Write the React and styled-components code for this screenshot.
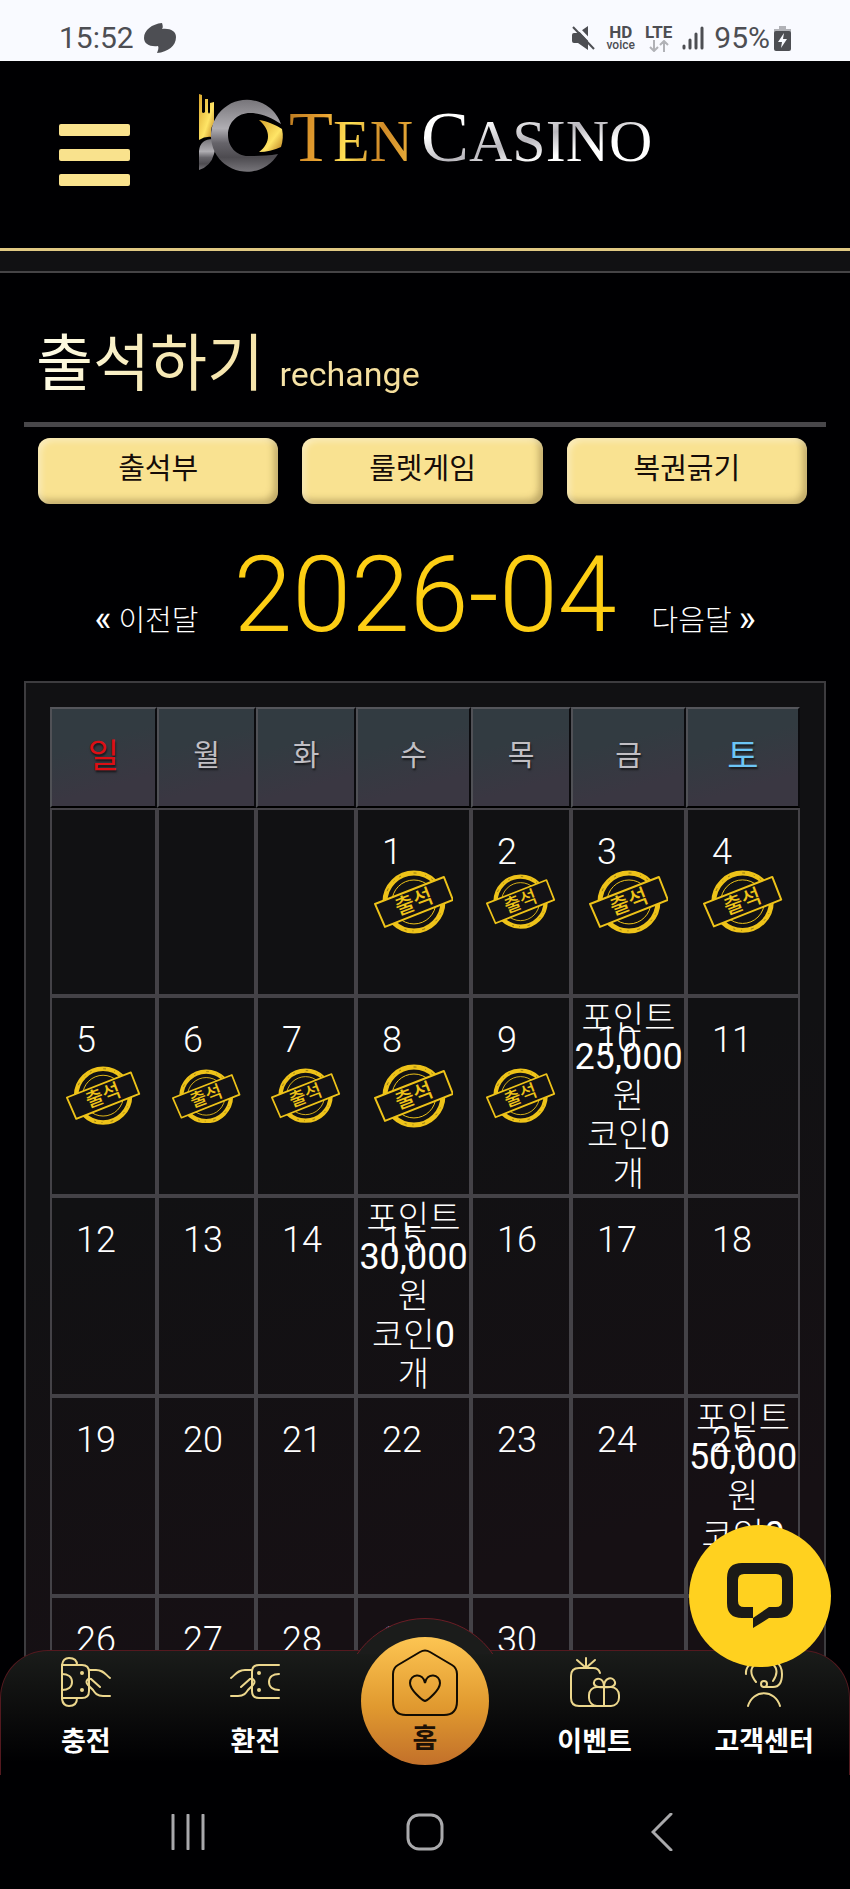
import React from "react";
import styled, { createGlobalStyle } from "styled-components";

const WEEKDAYS = [
  { label: "일", tone: "sun", width: 107 },
  { label: "월", width: 99 },
  { label: "화", width: 100 },
  { label: "수", width: 115 },
  { label: "목", width: 100 },
  { label: "금", width: 115 },
  { label: "토", tone: "sat", width: 114 },
];

const FIRST_WEEKDAY = 3;
const DAYS_IN_MONTH = 30;
const LAST_ATTENDED = 9;
const REWARDS = { 10: "25,000", 15: "30,000", 25: "50,000" };

const weeks = Array.from({ length: 5 }, (_, week) =>
  Array.from({ length: 7 }, (_, weekday) => {
    const day = week * 7 + weekday - FIRST_WEEKDAY + 1;
    return day >= 1 && day <= DAYS_IN_MONTH ? day : null;
  })
);

export default function App() {
  return (
    <Phone>
      <GlobalStyle />
      <StatusBar />
      <Viewport>
        <Page>
          <Header>
            <MenuButton type="button" aria-label="메뉴">
              <MenuBar />
              <MenuBar />
              <MenuBar />
            </MenuButton>
            <Logo href="#home">
              <LogoMark />
              <Words>
                <Wordmark $gold>
                  T<SmallCap>EN</SmallCap>
                </Wordmark>
                <Wordmark>
                  C<SmallCap>ASINO</SmallCap>
                </Wordmark>
              </Words>
            </Logo>
          </Header>
          <Strip />
          <Content>
            <TitleRow>
              <Title>
                출석하기 <SubTitle>rechange</SubTitle>
              </Title>
            </TitleRow>
            <Tabs>
              <TabButton type="button">출석부</TabButton>
              <TabButton type="button">룰렛게임</TabButton>
              <TabButton type="button">복권긁기</TabButton>
            </Tabs>
            <MonthRow>
              <MonthLink href="#prev">
                <b>«</b> 이전달
              </MonthLink>
              <Month>2026-04</Month>
              <MonthLink href="#next">
                다음달 <b>»</b>
              </MonthLink>
            </MonthRow>
            <Calendar />
          </Content>
        </Page>
        <BottomNav />
        <ChatButton type="button" aria-label="채팅">
          <svg width="66" height="66" viewBox="0 0 66 66">
            <path
              fill="#1b1a17"
              fillRule="evenodd"
              d="M15 0H51Q66 0 66 15V40Q66 55 51 55H42L26 65V55H15Q0 55 0 40V15Q0 0 15 0ZM17 11Q11 11 11 17V38Q11 44 17 44H26V55L42 44H49Q55 44 55 38V17Q55 11 49 11Z"
            />
          </svg>
        </ChatButton>
      </Viewport>
      <SystemNav />
    </Phone>
  );
}

function StatusBar() {
  return (
    <StatusWrap>
      <StatusGroup>
        <StatusText>15:52</StatusText>
        <svg width="32" height="30" viewBox="0 0 32 30">
          <path
            fill="#4d4e53"
            d="M18 0C19 3 19 5 18 6C26 5 32 8 32 14C32 23 24 29 13 30C14 27 15 25 14 23C6 24 0 21 0 15C0 7 8 1 18 0Z"
          />
        </svg>
      </StatusGroup>
      <StatusGroup>
        <svg width="24" height="24" viewBox="0 0 24 24">
          <path fill="#4d4e53" d="M0 9Q0 7 2 7H6L16 0V24L6 17H2Q0 17 0 15Z" />
          <path stroke="#f9faff" strokeWidth="3" d="M4 0L24 21" />
          <path stroke="#4d4e53" strokeWidth="2" d="M1 1L22 23" />
        </svg>
        <NetworkBadge>
          HD<small>voice</small>
        </NetworkBadge>
        <NetworkBadge>
          LTE
          <svg width="20" height="12" viewBox="0 0 20 12">
            <path
              fill="none"
              stroke="#b1b2b7"
              strokeWidth="2"
              d="M5 0V11M1 7L5 11L9 7M15 12V1M11 5L15 1L19 5"
            />
          </svg>
        </NetworkBadge>
        <svg width="22" height="24" viewBox="0 0 22 24">
          <path
            stroke="#4d4e53"
            strokeWidth="3"
            strokeLinecap="round"
            d="M2 20V22M8 14V22M14 8V22M20 2V22"
          />
        </svg>
        <BatteryGroup>
          <StatusText>95%</StatusText>
          <svg width="17" height="25" viewBox="0 0 17 25">
            <path fill="#b1b2b7" d="M5 0H12V3H17V7H0V3H5Z" />
            <rect y="5" width="17" height="20" rx="2" fill="#4d4e53" />
            <path fill="#f9faff" d="M10 7L4 16H8L7 22L13 13H9Z" />
          </svg>
        </BatteryGroup>
      </StatusGroup>
    </StatusWrap>
  );
}

function LogoMark() {
  return (
    <svg width="86" height="78" viewBox="0 0 86 78">
      <defs>
        <linearGradient id="silver" x1="0" y1="0" x2="0" y2="1">
          <stop offset="0" stopColor="#77757a" />
          <stop offset="0.4" stopColor="#b0aeb3" />
          <stop offset="0.6" stopColor="#66646a" />
          <stop offset="0.8" stopColor="#4d4b50" />
          <stop offset="1" stopColor="#77757a" />
        </linearGradient>
        <linearGradient id="gold" x1="0" y1="0" x2="1" y2="1">
          <stop offset="0" stopColor="#d9a52c" />
          <stop offset="0.6" stopColor="#ffe566" />
          <stop offset="1" stopColor="#b87a1c" />
        </linearGradient>
      </defs>
      <path
        fill="url(#gold)"
        d="M1 0L4 1V18Q5 20 7 18V5L10 5V18Q11 21 12 18V9L16 8V29Q11 36 14 43Q7 42 1 46Z"
      />
      <path fill="url(#silver)" d="M1 76V57Q2 45 15 45Q19 52 16 60Q13 72 1 76Z" />
      <path
        fill="url(#silver)"
        d="M83 30A36 36 0 1 0 80 60C70 62 60 62 50 62C38 62 30 52 30 41C30 28 40 19 52 19C63 19 73 23 83 30Z"
      />
      <path
        fill="url(#gold)"
        d="M61 26C69 27 78 31 84 35Q86 44 83 53Q72 58 61 58C73 49 73 36 61 26Z"
      />
    </svg>
  );
}

function Calendar() {
  return (
    <CalendarBox>
      <CalendarTable>
        <colgroup>
          {WEEKDAYS.map(({ label, width }) => (
            <col key={label} width={width} />
          ))}
        </colgroup>
        <thead>
          <tr>
            {WEEKDAYS.map(({ label, tone }) => (
              <WeekdayCell key={label} $tone={tone}>
                {label}
              </WeekdayCell>
            ))}
          </tr>
        </thead>
        <tbody>
          {weeks.map((days, week) => (
            <tr key={week}>
              {days.map((day, weekday) => (
                <DayCell key={weekday} $short={week === 0}>
                  {day && <DayNumber>{day}</DayNumber>}
                  {day && day <= LAST_ATTENDED && <Stamp />}
                  {REWARDS[day] && (
                    <Reward>
                      포인트
                      <br />
                      <b>{REWARDS[day]}</b>
                      <br />
                      원
                      <br />
                      코인<b>0</b>
                      <br />개
                    </Reward>
                  )}
                </DayCell>
              ))}
            </tr>
          ))}
        </tbody>
      </CalendarTable>
    </CalendarBox>
  );
}

function Stamp() {
  return (
    <StampSvg viewBox="0 0 80 64" role="img" aria-label="출석">
      <g fill="none" stroke="#eec319">
        <circle cx="40" cy="32" r="29" strokeWidth="5" />
        <circle cx="40" cy="32" r="22" strokeWidth="1" />
        <circle
          cx="40"
          cy="32"
          r="29"
          stroke="#8a7215"
          strokeWidth="1"
          strokeDasharray="3 9 1 6 2 13"
        />
        <path
          fill="#131215"
          strokeWidth="2"
          strokeLinejoin="round"
          d="M1 34L70 7L79 30L11 57Z"
        />
      </g>
      <text
        x="40"
        y="39"
        textAnchor="middle"
        fontSize="21"
        fontWeight="500"
        fill="#eec319"
        transform="rotate(-21 40 32)"
      >
        출석
      </text>
    </StampSvg>
  );
}

const chipCard = (
  <>
    <path d="M1 8H21Q28 8 28 15V34Q28 41 21 41H1M1 17C7 17 11 20 11 25S7 33 1 33" />
    <path d="M28 13H35C42 13 44 17 49 21M49 39H42C36 39 34 36 32 33L27 28C24 25 26 21 30 22L39 30" />
    <circle cx="21" cy="16" r="1" />
    <circle cx="21" cy="33" r="1" />
  </>
);

const navItems = [
  {
    label: "충전",
    icon: (
      <>
        {chipCard}
        <path d="M1 8V42M1 8Q2 1 8 1Q16 1 16 8M1 42Q2 49 8 49Q16 49 16 41" />
      </>
    ),
  },
  { label: "환전", icon: <g transform="matrix(-1 0 0 1 50 0)">{chipCard}</g> },
  { label: "홈", home: true },
  {
    label: "이벤트",
    icon: (
      <>
        <path d="M30 16C29 12 27 11 23 11H9Q1 11 1 19V41Q1 49 9 49H40M16 1V10M7 3L15 10M25 3L17 10" />
        <rect x="19" y="30" width="30" height="19" rx="8" />
        <path d="M34 49V30C28 31 23 29 24 25C25 20 34 20 34 30C34 20 43 19 45 25C46 29 41 31 34 30" />
      </>
    ),
  },
  {
    label: "고객센터",
    icon: (
      <>
        <path d="M7 17C5 0 43 -7 43 17Q43 30 34 30H25M17 25C8 14 13 5 25 5S41 14 34 24M9 49C14 32 36 32 41 49" />
        <circle cx="25" cy="27" r="3" />
      </>
    ),
  },
];

function BottomNav() {
  return (
    <NavBar>
      <HumpClip>
        <Hump />
      </HumpClip>
      {navItems.map(({ label, icon, home }) =>
        home ? (
          <HomeLink key={label} href="#home">
            <svg
              width="66"
              height="67"
              viewBox="0 0 66 67"
              fill="none"
              stroke="#120c02"
              strokeWidth="2"
            >
              <path d="M28 3Q33 0 38 3L60 16Q65 19 65 25V52Q65 66 52 66H14Q1 66 1 52V25Q1 19 6 16Z" />
              <path d="M33 52C30 51 18 41 18 34C18 25 31 23 33 34C35 23 48 25 48 34C48 41 36 51 33 52Z" />
            </svg>
            <NavLabel>{label}</NavLabel>
          </HomeLink>
        ) : (
          <NavLink key={label} href="#menu">
            <svg
              width="50"
              height="50"
              viewBox="0 0 50 50"
              fill="none"
              stroke="#ecd78d"
              strokeWidth="2"
              strokeLinecap="round"
            >
              {icon}
            </svg>
            <NavLabel>{label}</NavLabel>
          </NavLink>
        )
      )}
    </NavBar>
  );
}

function SystemNav() {
  return (
    <SystemBar>
      <SystemButton type="button" aria-label="최근 앱">
        <svg width="34" height="36" viewBox="0 0 34 36">
          <path d="M2 1V35M17 1V35M32 1V35" />
        </svg>
      </SystemButton>
      <SystemButton type="button" aria-label="홈 화면">
        <svg width="38" height="38" viewBox="0 0 38 38">
          <rect x="2" y="2" width="34" height="34" rx="11" />
        </svg>
      </SystemButton>
      <SystemButton type="button" aria-label="뒤로">
        <svg width="22" height="38" viewBox="0 0 22 38">
          <path d="M20 1L2 19L20 37" />
        </svg>
      </SystemButton>
    </SystemBar>
  );
}

const GlobalStyle = createGlobalStyle`
  *, *::before, *::after {
    box-sizing: border-box;
  }

  body {
    margin: 0;
    background: #000002;
    color: #ffffff;
    font-family: Roboto, "Noto Sans CJK KR", sans-serif;
  }

  button {
    padding: 0;
    border: 0;
    background: none;
    color: inherit;
    font: inherit;
    cursor: pointer;
  }

  a {
    color: inherit;
    text-decoration: none;
  }

  svg {
    display: block;
    flex-shrink: 0;
  }
`;

const Phone = styled.div`
  display: flex;
  flex-direction: column;
  height: 100vh;
  overflow: hidden;
`;

const StatusWrap = styled.div`
  flex-shrink: 0;
  display: flex;
  justify-content: space-between;
  height: 61px;
  padding: 15px 59px 0;
  background: #f9faff;
  color: #4d4e53;
`;

const StatusGroup = styled.div`
  display: flex;
  align-items: center;
  gap: 10px;
`;

const BatteryGroup = styled(StatusGroup)`
  gap: 4px;
`;

const StatusText = styled.span`
  font-size: 30px;
  line-height: 36px;
`;

const NetworkBadge = styled.span`
  display: flex;
  flex-direction: column;
  align-items: center;
  gap: 1px;
  font-size: 17px;
  font-weight: 700;
  line-height: 14px;

  small {
    font-size: 12px;
    font-weight: 500;
    line-height: 11px;
  }
`;

const Viewport = styled.div`
  position: relative;
  flex: 1;
  min-height: 0;
  overflow: hidden;
`;

const Page = styled.main`
  height: 100%;
  overflow: hidden;
`;

const Header = styled.header`
  display: flex;
  align-items: center;
  gap: 68px;
  height: 190px;
  padding: 0 59px;
  border-bottom: 3px solid #e0c983;
`;

const MenuButton = styled.button`
  display: flex;
  flex-direction: column;
  gap: 13px;
  width: 71px;
`;

const MenuBar = styled.span`
  height: 12px;
  border-radius: 2px;
  background: #f9e28d;
`;

const Logo = styled.a`
  display: flex;
  align-self: flex-start;
  gap: 5px;
  margin-top: 33px;
  font-family: "Liberation Serif", serif;
`;

const Words = styled.span`
  display: flex;
  gap: 8px;
`;

const Wordmark = styled.span`
  font-size: 72px;
  line-height: 86px;
  color: transparent;
  background: ${({ $gold }) =>
    $gold
      ? "linear-gradient(100deg, #b87820 0%, #e8a030 28%, #ffe255 48%, #d08a28 72%, #edb43c 100%)"
      : "linear-gradient(165deg, #ffffff 30%, #b9b7bd 50%, #ffffff 66%)"};
  -webkit-background-clip: text;
  background-clip: text;
`;

const SmallCap = styled.span`
  font-size: 60px;
  line-height: 1;
`;

const Strip = styled.div`
  height: 22px;
  border-bottom: 2px solid #454446;
  background: #111113;
`;

const Content = styled.section`
  padding: 0 24px;
`;

const TitleRow = styled.div`
  padding: 52px 12px 17px;
  border-bottom: 5px solid #48474a;
`;

const Title = styled.h1`
  width: fit-content;
  margin: 0;
  font-size: 62px;
  font-weight: 400;
  line-height: 80px;
  color: transparent;
  background: linear-gradient(100deg, #ffffec 0%, #f7eab8 30%, #f5dd98 100%);
  -webkit-background-clip: text;
  background-clip: text;
`;

const SubTitle = styled.small`
  font-size: 34px;
  line-height: 1;
`;

const Tabs = styled.div`
  display: grid;
  grid-template-columns: repeat(3, 1fr);
  gap: 24px;
  padding: 11px 19px 0 14px;
`;

const TabButton = styled.button`
  height: 66px;
  padding-bottom: 4px;
  border-radius: 12px;
  background: #f9e291;
  box-shadow: inset 3px 3px 6px rgba(255, 255, 255, 0.4),
    inset -4px -4px 7px rgba(80, 60, 20, 0.35);
  color: #150c08;
  font-size: 29px;
  line-height: 40px;
`;

const MonthRow = styled.div`
  display: flex;
  justify-content: center;
  align-items: baseline;
  gap: 35px;
  margin: 31px 0 26px;
`;

const Month = styled.h2`
  margin: 0;
  color: #fdce14;
  font-size: 106px;
  font-weight: 300;
  line-height: 120px;
`;

const MonthLink = styled.a`
  font-size: 29px;
  font-weight: 300;
  line-height: 40px;

  b {
    font-size: 36px;
    font-weight: 400;
    line-height: 1;
  }
`;

const CalendarBox = styled.div`
  padding: 24px;
  border: 2px solid #3d3c3f;
  background: linear-gradient(165deg, #111113 40%, #161014 75%);
`;

const CalendarTable = styled.table`
  width: 100%;
  table-layout: fixed;
  border-collapse: separate;
  border-spacing: 0;
`;

const toneColors = { sun: "#dc0f14", sat: "#6cc5f5" };

const WeekdayCell = styled.th`
  height: 101px;
  padding: 0 0 4px;
  border: 2px solid;
  border-color: #55565b #0b0b0e #000000 #505156;
  background: linear-gradient(165deg, #323b41 35%, #3a3742 75%);
  color: ${({ $tone }) => toneColors[$tone] || "#c1bfc4"};
  font-size: ${({ $tone }) => ($tone ? 34 : 29)}px;
  font-weight: 400;
  line-height: 40px;
  text-shadow: 1px 2px 2px rgba(0, 0, 0, 0.6);
`;

const DayCell = styled.td`
  position: relative;
  height: ${({ $short }) => ($short ? 188 : 200)}px;
  padding: 0;
  border: 2px solid #444247;
  vertical-align: middle;
`;

const DayNumber = styled.span`
  position: absolute;
  top: 22px;
  left: 24px;
  font-size: 36px;
  font-weight: 300;
  line-height: 40px;
`;

const StampSvg = styled.svg`
  width: 72%;
  margin: 0 auto;
`;

const Reward = styled.div`
  font-size: 34px;
  font-weight: 300;
  line-height: 39px;
  text-align: center;
  white-space: nowrap;

  b {
    font-size: 36px;
    font-weight: 400;
    line-height: 1;
  }
`;

const NavBar = styled.nav`
  position: absolute;
  right: 0;
  bottom: 0;
  left: 0;
  display: grid;
  grid-template-columns: repeat(5, 1fr);
  justify-items: center;
  align-items: start;
  height: 125px;
  border: 1px solid #54191f;
  border-bottom: 0;
  border-radius: 48px 48px 0 0;
  background: linear-gradient(#1a1c1a, #0c0c0c 50%, #000002 90%);
`;

/* shows only the part of the circle that rises above the bar */
const HumpClip = styled.div`
  position: absolute;
  top: -33px;
  left: 50%;
  width: 166px;
  height: 36px;
  margin-left: -83px;
  overflow: hidden;
`;

const Hump = styled.div`
  height: 166px;
  border: 1px solid #6b1d25;
  border-radius: 50%;
  background: #1b1c1b;
`;

const NavLink = styled.a`
  display: flex;
  flex-direction: column;
  align-items: center;
  gap: 18px;
  padding-top: 6px;
`;

const NavLabel = styled.span`
  font-size: 27px;
  font-weight: 700;
  line-height: 34px;
`;

const HomeLink = styled.a`
  position: relative;
  display: flex;
  flex-direction: column;
  align-items: center;
  gap: 6px;
  width: 128px;
  height: 128px;
  margin-top: -14px;
  padding-top: 12px;
  border-radius: 50%;
  background: linear-gradient(#fdc552, #e0992f 55%, #c2702a);
  color: #1d1106;
`;

const ChatButton = styled.button`
  position: absolute;
  right: 19px;
  bottom: 108px;
  display: flex;
  justify-content: center;
  align-items: center;
  width: 142px;
  height: 142px;
  border-radius: 50%;
  background: #ffd11f;
`;

const SystemBar = styled.div`
  flex-shrink: 0;
  display: grid;
  grid-template-columns: repeat(3, 1fr);
  height: 114px;
  padding: 0 69px;
`;

const SystemButton = styled.button`
  display: flex;
  justify-content: center;
  align-items: center;

  svg {
    fill: none;
    stroke: #a9a9ac;
    stroke-width: 3;
    stroke-linecap: round;
  }
`;
